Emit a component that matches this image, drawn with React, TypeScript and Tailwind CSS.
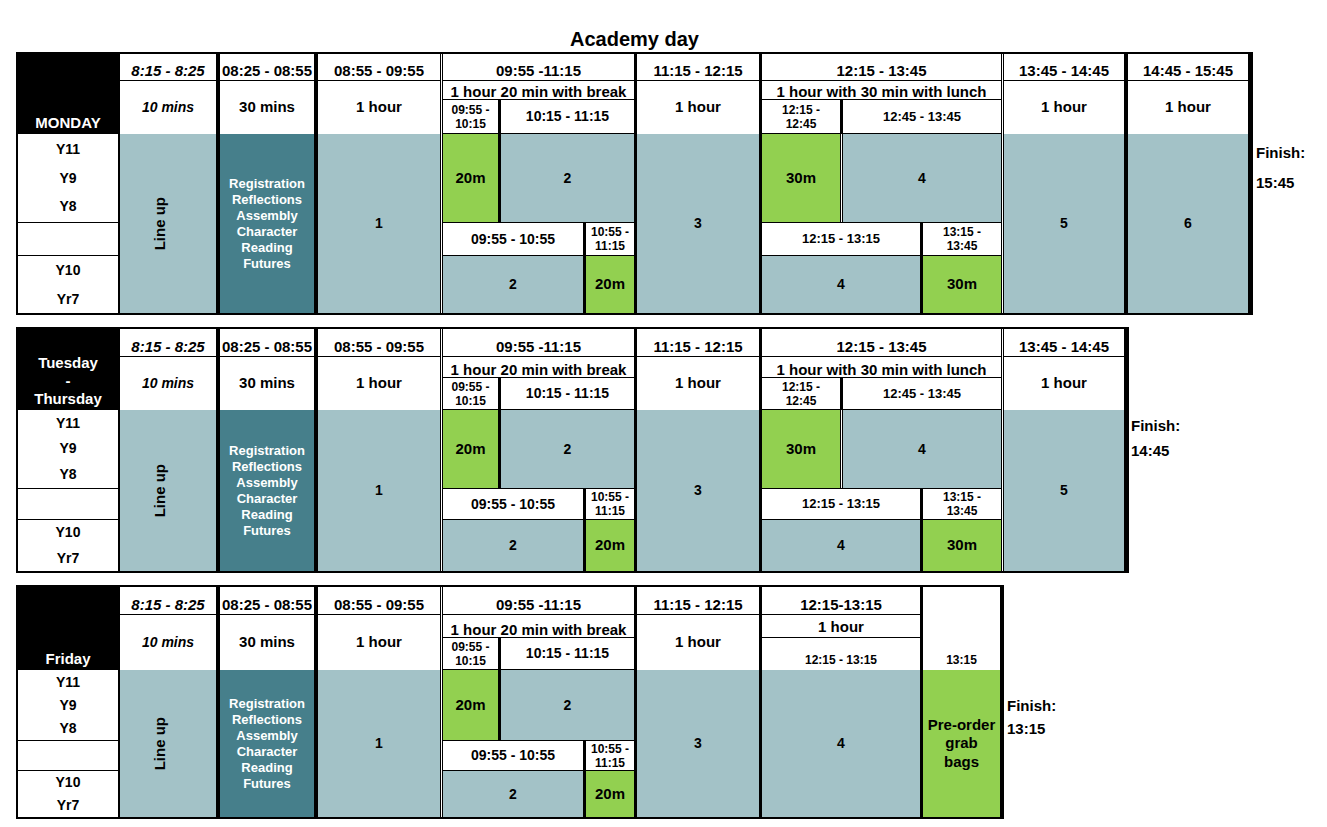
const GREY = 'bg-[#a3c2c7]';
const TEAL = 'bg-[#467f8b]';
const GREEN = 'bg-[#92d050]';

type Dims = {
  h1: string;
  h2: string;
  h2a: string;
  h2b: string;
  head: string;
  body: string;
  top: string;
  mid: string;
  bot: string;
  lead: string;
};

const MON: Dims = {
  h1: 'h-[27px]',
  h2: 'h-[53px]',
  h2a: 'h-[19px]',
  h2b: 'h-[34px]',
  head: 'h-[80px]',
  body: 'h-[179px]',
  top: 'h-[88px]',
  mid: 'h-[34px]',
  bot: 'h-[57px]',
  lead: 'leading-[28.5px]',
};

const TUE: Dims = {
  h1: 'h-[28px]',
  h2: 'h-[53px]',
  h2a: 'h-[21px]',
  h2b: 'h-[32px]',
  head: 'h-[81px]',
  body: 'h-[161px]',
  top: 'h-[78px]',
  mid: 'h-[32px]',
  bot: 'h-[51px]',
  lead: 'leading-[25.5px]',
};

const FRI: Dims = {
  h1: 'h-[28px]',
  h2: 'h-[55px]',
  h2a: 'h-[23px]',
  h2b: 'h-[32px]',
  head: 'h-[83px]',
  body: 'h-[147px]',
  top: 'h-[70px]',
  mid: 'h-[31px]',
  bot: 'h-[46px]',
  lead: 'leading-[23px]',
};

function Thick({ w = 'w-[3px]' }: { w?: string }) {
  return <div className={`${w} shrink-0 bg-black`} />;
}

function Double() {
  return <div className="w-[3px] shrink-0 border-x border-black bg-white" />;
}

function Head1({ d, children, italic }: { d: Dims; children: React.ReactNode; italic?: boolean }) {
  return (
    <div
      className={`${d.h1} flex items-end justify-center whitespace-nowrap border-b border-black bg-white pb-[1px] text-[15px] font-bold leading-[17px] ${italic ? 'italic' : ''}`}
    >
      {children}
    </div>
  );
}

function Small({ a, b }: { a: string; b: string }) {
  return (
    <div className="text-center text-[12px] font-bold leading-[14px]">
      {a}
      <br />
      {b}
    </div>
  );
}

function Col({
  w,
  d,
  time,
  dur,
  durCls = 'text-[15px]',
  body,
  italic,
}: {
  w: string;
  d: Dims;
  time: string;
  dur: string;
  durCls?: string;
  body: string;
  italic?: boolean;
}) {
  return (
    <div className={`${w} flex shrink-0 flex-col`}>
      <Head1 d={d} italic={italic}>
        {time}
      </Head1>
      <div className={`${d.h2} flex items-center justify-center bg-white font-bold ${durCls} ${italic ? 'italic' : ''}`}>
        {dur}
      </div>
      <div className={`${d.body} ${GREY} flex items-center justify-center text-[14px] font-bold`}>{body}</div>
    </div>
  );
}

function DayCol({ d, label }: { d: Dims; label: React.ReactNode }) {
  return (
    <div className="flex w-[102px] shrink-0 flex-col border-r-2 border-black">
      <div
        className={`${d.head} flex flex-col items-center justify-end bg-black pb-[2px] text-center text-[15px] font-bold leading-[18px] text-white`}
      >
        {label}
      </div>
      <div className={`${d.top} flex flex-col items-center justify-center bg-white text-[14px] font-bold ${d.lead}`}>
        <span>Y11</span>
        <span>Y9</span>
        <span>Y8</span>
      </div>
      <div className={`${d.mid} border-y border-black bg-white`} />
      <div className={`${d.bot} flex flex-col items-center justify-center bg-white text-[14px] font-bold ${d.lead}`}>
        <span>Y10</span>
        <span>Yr7</span>
      </div>
    </div>
  );
}

function LineUpCol({ d }: { d: Dims }) {
  return (
    <div className="flex w-[96px] shrink-0 flex-col">
      <Head1 d={d} italic>
        8:15 - 8:25
      </Head1>
      <div className={`${d.h2} flex items-center justify-center bg-white text-[14px] font-bold italic`}>10 mins</div>
      <div className={`${d.body} ${GREY} flex items-center justify-center pr-[16px]`}>
        <span className="rotate-180 text-[15px] font-bold [writing-mode:vertical-rl]">Line up</span>
      </div>
    </div>
  );
}

function RegCol({ d }: { d: Dims }) {
  return (
    <div className="flex w-[94px] shrink-0 flex-col">
      <Head1 d={d}>08:25 - 08:55</Head1>
      <div className={`${d.h2} flex items-center justify-center bg-white text-[15px] font-bold`}>30 mins</div>
      <div
        className={`${d.body} ${TEAL} flex flex-col items-center justify-center text-center text-[13px] font-bold leading-[16px] text-white`}
      >
        <span>Registration</span>
        <span>Reflections</span>
        <span>Assembly</span>
        <span>Character</span>
        <span>Reading</span>
        <span>Futures</span>
      </div>
    </div>
  );
}

function SplitCol({
  d,
  w,
  time,
  note,
  firstW,
  firstSub,
  restSub,
  restSubCls,
  gap,
  first,
  rest,
  lowW,
  lowSideW,
  lowMain,
  lowMainCls,
  lowSide,
  lowGap,
  lowSideBody,
}: {
  d: Dims;
  w: string;
  time: string;
  note: string;
  firstW: string;
  firstSub: [string, string];
  restSub: string;
  restSubCls: string;
  gap: 'thick' | 'double';
  first: string;
  rest: string;
  lowW: string;
  lowSideW: string;
  lowMain: string;
  lowMainCls: string;
  lowSide: [string, string];
  lowGap: string;
  lowSideBody: string;
}) {
  return (
    <div className={`${w} flex shrink-0 flex-col`}>
      <Head1 d={d}>{time}</Head1>
      <div
        className={`${d.h2a} flex items-end justify-center whitespace-nowrap border-b border-black bg-white text-[15px] font-bold leading-[14px]`}
      >
        {note}
      </div>
      <div className={`${d.h2b} flex border-b border-black bg-white`}>
        <div className={`${firstW} flex shrink-0 items-center justify-center`}>
          <Small a={firstSub[0]} b={firstSub[1]} />
        </div>
        <Thick />
        <div className={`flex flex-1 items-center justify-center font-bold ${restSubCls}`}>{restSub}</div>
      </div>
      <div className={`${d.top} flex`}>
        <div className={`${firstW} ${GREEN} flex shrink-0 items-center justify-center text-[15px] font-bold`}>{first}</div>
        {gap === 'thick' ? <Thick /> : <Double />}
        <div className={`flex-1 ${GREY} flex items-center justify-center text-[14px] font-bold`}>{rest}</div>
      </div>
      <div className="flex">
        <div className={`${lowW} flex shrink-0 flex-col`}>
          <div className={`${d.mid} flex items-center justify-center border-y border-black bg-white font-bold ${lowMainCls}`}>
            {lowMain}
          </div>
          <div className={`${d.bot} ${GREY} flex items-center justify-center text-[14px] font-bold`}>{lowGap}</div>
        </div>
        <Thick />
        <div className={`${lowSideW} flex shrink-0 flex-col`}>
          <div className={`${d.mid} flex items-center justify-center border-y border-black bg-white`}>
            <Small a={lowSide[0]} b={lowSide[1]} />
          </div>
          <div className={`${d.bot} ${GREEN} flex items-center justify-center text-[15px] font-bold`}>{lowSideBody}</div>
        </div>
      </div>
    </div>
  );
}

function BreakCol({ d }: { d: Dims }) {
  return (
    <SplitCol
      d={d}
      w="w-[191px]"
      time="09:55 -11:15"
      note="1 hour 20 min with break"
      firstW="w-[55px]"
      firstSub={['09:55 -', '10:15']}
      restSub="10:15 - 11:15"
      restSubCls="text-[14px]"
      gap="thick"
      first="20m"
      rest="2"
      lowW="w-[140px]"
      lowSideW="w-[48px]"
      lowMain="09:55 - 10:55"
      lowMainCls="text-[14px]"
      lowSide={['10:55 -', '11:15']}
      lowGap="2"
      lowSideBody="20m"
    />
  );
}

function LunchCol({ d }: { d: Dims }) {
  return (
    <SplitCol
      d={d}
      w="w-[239px]"
      time="12:15 - 13:45"
      note="1 hour with 30 min with lunch"
      firstW="w-[78px]"
      firstSub={['12:15 -', '12:45']}
      restSub="12:45 - 13:45"
      restSubCls="text-[13px]"
      gap="double"
      first="30m"
      rest="4"
      lowW="w-[158px]"
      lowSideW="w-[78px]"
      lowMain="12:15 - 13:15"
      lowMainCls="text-[13px]"
      lowSide={['13:15 -', '13:45']}
      lowGap="4"
      lowSideBody="30m"
    />
  );
}

function FridayEnd({ d }: { d: Dims }) {
  return (
    <>
      <div className="flex w-[158px] shrink-0 flex-col">
        <Head1 d={d}>12:15-13:15</Head1>
        <div
          className={`${d.h2a} flex items-center justify-center border-b border-black bg-white pt-[2px] text-[15px] font-bold`}
        >
          1 hour
        </div>
        <div className={`${d.h2b} flex items-end justify-center bg-white pb-[3px] text-[12px] font-bold leading-[14px]`}>
          12:15 - 13:15
        </div>
        <div className={`${d.body} ${GREY} flex items-center justify-center text-[14px] font-bold`}>4</div>
      </div>
      <Thick />
      <div className="flex w-[77px] shrink-0 flex-col">
        <div className={`${d.head} flex items-end justify-center bg-white pb-[3px] text-[12px] font-bold leading-[14px]`}>
          13:15
        </div>
        <div
          className={`${d.body} ${GREEN} flex flex-col items-center justify-center text-center text-[15px] font-bold leading-[18.5px]`}
        >
          <span>Pre-order</span>
          <span>grab</span>
          <span>bags</span>
        </div>
      </div>
      <Thick w="w-[4px]" />
    </>
  );
}

function Finish({ time, cls }: { time: string; cls: string }) {
  return (
    <div className={`text-[15px] font-bold ${cls}`}>
      Finish:
      <br />
      {time}
    </div>
  );
}

export default function App() {
  return (
    <div className="min-h-screen w-[1327px] bg-white font-['Liberation_Sans',Arial,sans-serif] text-black">
      <div className="ml-[16px] w-[1237px] pt-[28px] text-center text-[20px] font-bold leading-[23px]">Academy day</div>

      <div className="ml-[16px] mt-[1px] flex items-start">
        <div className="flex border-y-2 border-l-2 border-black">
          <DayCol d={MON} label="MONDAY" />
          <LineUpCol d={MON} />
          <Thick w="w-[4px]" />
          <RegCol d={MON} />
          <Thick w="w-[4px]" />
          <Col w="w-[122px]" d={MON} time="08:55 - 09:55" dur="1 hour" body="1" />
          <Double />
          <BreakCol d={MON} />
          <Thick />
          <Col w="w-[122px]" d={MON} time="11:15 - 12:15" dur="1 hour" body="3" />
          <Thick />
          <LunchCol d={MON} />
          <Double />
          <Col w="w-[120px]" d={MON} time="13:45 - 14:45" dur="1 hour" body="5" />
          <Thick w="w-[4px]" />
          <Col w="w-[120px]" d={MON} time="14:45 - 15:45" dur="1 hour" body="6" />
          <Thick w="w-[5px]" />
        </div>
        <Finish time="15:45" cls="ml-[3px] pt-[86px] leading-[30px]" />
      </div>

      <div className="ml-[16px] mt-[12px] flex items-start">
        <div className="flex border-y-2 border-l-2 border-black">
          <DayCol
            d={TUE}
            label={
              <>
                <span>Tuesday</span>
                <span>-</span>
                <span>Thursday</span>
              </>
            }
          />
          <LineUpCol d={TUE} />
          <Thick w="w-[4px]" />
          <RegCol d={TUE} />
          <Thick w="w-[4px]" />
          <Col w="w-[122px]" d={TUE} time="08:55 - 09:55" dur="1 hour" body="1" />
          <Double />
          <BreakCol d={TUE} />
          <Thick />
          <Col w="w-[122px]" d={TUE} time="11:15 - 12:15" dur="1 hour" body="3" />
          <Thick />
          <LunchCol d={TUE} />
          <Double />
          <Col w="w-[120px]" d={TUE} time="13:45 - 14:45" dur="1 hour" body="5" />
          <Thick w="w-[5px]" />
        </div>
        <Finish time="14:45" cls="ml-[2px] pt-[86px] leading-[25px]" />
      </div>

      <div className="ml-[16px] mt-[12px] flex items-start">
        <div className="flex border-y-2 border-l-2 border-black">
          <DayCol d={FRI} label="Friday" />
          <LineUpCol d={FRI} />
          <Thick w="w-[4px]" />
          <RegCol d={FRI} />
          <Thick w="w-[4px]" />
          <Col w="w-[122px]" d={FRI} time="08:55 - 09:55" dur="1 hour" body="1" />
          <Double />
          <BreakCol d={FRI} />
          <Thick />
          <Col w="w-[122px]" d={FRI} time="11:15 - 12:15" dur="1 hour" body="3" />
          <Thick />
          <FridayEnd d={FRI} />
        </div>
        <Finish time="13:15" cls="ml-[3px] pt-[109px] leading-[23px]" />
      </div>
    </div>
  );
}
